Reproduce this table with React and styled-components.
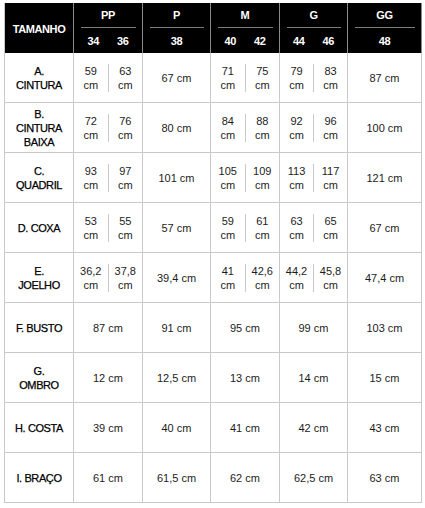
import styled, { createGlobalStyle } from "styled-components";

const GlobalStyle = createGlobalStyle`
    body {
        margin: 0;
        background: #fff;
        font-family: "Liberation Sans", Arial, sans-serif;
    }
`;

const sizes = [
    { name: "PP", nums: ["34", "36"] },
    { name: "P", nums: ["38"] },
    { name: "M", nums: ["40", "42"] },
    { name: "G", nums: ["44", "46"] },
    { name: "GG", nums: ["48"] },
];

const rows = [
    { label: ["A.", "CINTURA"], values: [["59", "63"], "67", ["71", "75"], ["79", "83"], "87"] },
    { label: ["B.", "CINTURA", "BAIXA"], values: [["72", "76"], "80", ["84", "88"], ["92", "96"], "100"] },
    { label: ["C.", "QUADRIL"], values: [["93", "97"], "101", ["105", "109"], ["113", "117"], "121"] },
    { label: ["D. COXA"], values: [["53", "55"], "57", ["59", "61"], ["63", "65"], "67"] },
    { label: ["E.", "JOELHO"], values: [["36,2", "37,8"], "39,4", ["41", "42,6"], ["44,2", "45,8"], "47,4"] },
    { label: ["F. BUSTO"], values: ["87", "91", "95", "99", "103"] },
    { label: ["G.", "OMBRO"], values: ["12", "12,5", "13", "14", "15"] },
    { label: ["H. COSTA"], values: ["39", "40", "41", "42", "43"] },
    { label: ["I. BRAÇO"], values: ["61", "61,5", "62", "62,5", "63"] },
];

function App() {
    return (
        <>
            <GlobalStyle />
            <Page>
                <Table>
                    <HeadCell>
                        <HeadTitle>TAMANHO</HeadTitle>
                    </HeadCell>
                    {sizes.map((s) => (
                        <HeadCell key={s.name}>
                            <HeadTop>{s.name}</HeadTop>
                            <HeadLine />
                            <HeadBottom>
                                {s.nums.map((n) => (
                                    <span key={n}>{n}</span>
                                ))}
                            </HeadBottom>
                        </HeadCell>
                    ))}
                    {rows.map((row) => (
                        <Row key={row.label.join(" ")}>
                            <LabelCell>
                                {row.label.map((l) => (
                                    <div key={l}>{l}</div>
                                ))}
                            </LabelCell>
                            {row.values.map((v, i) =>
                                Array.isArray(v) ? (
                                    <Cell key={i}>
                                        <Split>
                                            {v.map((n, j) => (
                                                <Half key={j} $divider={j > 0}>
                                                    <div>{n}</div>
                                                    <div>cm</div>
                                                </Half>
                                            ))}
                                        </Split>
                                    </Cell>
                                ) : (
                                    <Cell key={i}>{v} cm</Cell>
                                )
                            )}
                        </Row>
                    ))}
                </Table>
            </Page>
        </>
    );
}

const Page = styled.div`
    padding: 3px 0 0 4px;
`;

const Table = styled.div`
    display: grid;
    grid-template-columns: 69px 69px 68px 69px 68px 74px;
    width: 418px;
    border-left: 1px solid #c9c9c9;
    box-sizing: border-box;
`;

const HeadCell = styled.div`
    height: 50px;
    background: #000;
    color: #fff;
    border-right: 1px solid #8a8a8a;
    display: flex;
    flex-direction: column;
    justify-content: center;
    font-weight: 700;
    font-size: 11px;
    letter-spacing: -0.4px;
`;

const HeadTitle = styled.div`
    text-align: center;
    padding-top: 2px;
`;

const HeadTop = styled.div`
    height: 25px;
    display: flex;
    align-items: center;
    justify-content: center;
`;

const HeadLine = styled.div`
    height: 1px;
    margin: 0 6px 0 7px;
    background: #7a7a7a;
`;

const HeadBottom = styled.div`
    height: 24px;
    display: flex;
    align-items: center;
    justify-content: center;
    gap: 18px;
    padding-top: 2px;
`;

const Row = styled.div`
    display: contents;
`;

const Cell = styled.div`
    height: 49px;
    border-right: 1px solid #c9c9c9;
    border-bottom: 1px solid #c9c9c9;
    display: flex;
    align-items: center;
    justify-content: center;
    font-size: 11px;
    color: #1c1c1c;
    line-height: 14px;
`;

const LabelCell = styled(Cell)`
    flex-direction: column;
    color: #000;
    letter-spacing: -0.4px;
    text-align: center;
    -webkit-text-stroke: 0.25px #000;
`;

const Split = styled.div`
    display: flex;
    width: 100%;
`;

const Half = styled.div`
    flex: 1;
    text-align: center;
    line-height: 14px;
    border-left: ${(p) => (p.$divider ? "1px solid #c9c9c9" : "none")};
`;

export default App;
